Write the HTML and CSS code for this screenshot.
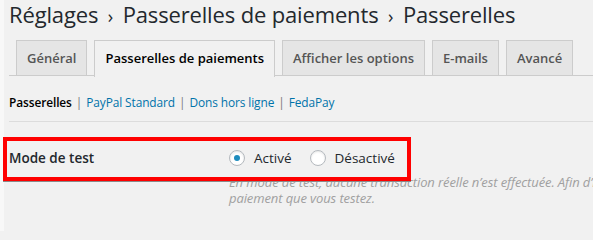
FILE: index.html
```html
<!DOCTYPE html>
<html lang="fr">
<head>
<meta charset="utf-8">
<link rel="stylesheet" href="styles.css">
</head>
<body>
<div class="edge"></div>
<div class="wrap">
  <h1 class="title">Réglages <span class="sep">›</span> Passerelles de paiements <span class="sep">›</span> Passerelles</h1>
  <nav class="tabs">
    <a class="tab">Général</a>
    <a class="tab active">Passerelles de paiements</a>
    <a class="tab">Afficher les options</a>
    <a class="tab">E-mails</a>
    <a class="tab">Avancé</a>
  </nav>
  <ul class="subnav">
    <li class="current">Passerelles</li>
    <li class="bar">|</li>
    <li><a>PayPal Standard</a></li>
    <li class="bar">|</li>
    <li><a>Dons hors ligne</a></li>
    <li class="bar">|</li>
    <li><a>FedaPay</a></li>
  </ul>
  <hr class="rule">
  <div class="row">
    <div class="label">Mode de test</div>
    <div class="field">
      <div class="radios">
        <label class="radio"><span class="dot checked"></span>Activé</label>
        <label class="radio"><span class="dot"></span>Désactivé</label>
      </div>
      <p class="desc">En mode de test, aucune transaction réelle n’est effectuée. Afin d’initier des paiements de test, utilisez le moyen de<br>paiement que vous testez.</p>
    </div>
  </div>
</div>
<div class="highlight"></div>
</body>
</html>
```
FILE: styles.css
```css
html, body {
  margin: 0;
  padding: 0;
  overflow: hidden;
  background: #f1f1f1;
  width: 593px;
  height: 231px;
}
body {
  position: relative;
  font-family: "Open Sans", "Noto Sans", sans-serif;
  color: #23282d;
}
.edge {
  position: absolute;
  left: 0;
  top: 0;
  width: 4px;
  height: 100%;
  background: #f8f8f8;
}
.wrap {
  padding-left: 9px;
}
.title {
  margin: 0;
  padding-top: 1px;
  font-size: 22px;
  font-weight: 400;
  line-height: 26px;
  white-space: nowrap;
  letter-spacing: -0.15px;
}
.sep {
  font-size: 18px;
  padding: 0 4px;
}
.tabs {
  display: flex;
  margin-top: 11px;
  border-bottom: 1px solid #ccc;
  height: 35px;
}
.tab {
  display: block;
  margin-left: 7px;
  padding: 5px 10px;
  line-height: 24px;
  font-size: 13px;
  font-weight: 600;
  color: #555;
  background: #e5e5e5;
  border: 1px solid #ccc;
  border-bottom: none;
  white-space: nowrap;
}
.tab.active {
  background: #f1f1f1;
  color: #000;
  height: 25px;
  padding-bottom: 6px;
  margin-bottom: -1px;
}
.subnav {
  list-style: none;
  margin: 17px 0 0;
  padding: 0;
  display: flex;
  font-size: 11.9px;
  line-height: 18px;
  white-space: nowrap;
  letter-spacing: -0.1px;
}
.subnav li { color: #0073aa; }
.subnav .current { color: #000; font-weight: 600; }
.subnav .bar { color: #777; padding: 0 4px; }
.subnav a { color: #0073aa; }
.rule {
  margin: 10px 0 0;
  border: 0;
  border-top: 1px solid #dcdcdc;
}
.row {
  display: flex;
  margin-top: 26px;
}
.label {
  flex: 0 0 220px;
  font-size: 13.5px;
  font-weight: 600;
  line-height: 20px;
  color: #23282d;
}
.field {
  display: flex;
  flex-direction: column;
  min-width: 0;
}
.radios {
  display: flex;
  align-items: center;
  height: 20px;
  font-size: 13.5px;
}
.radio {
  display: flex;
  align-items: center;
  margin-right: 18px;
}
.dot {
  width: 14px;
  height: 14px;
  border: 1px solid #b4b9be;
  border-radius: 50%;
  background: #fff;
  box-shadow: inset 0 1px 2px rgba(0,0,0,0.1);
  margin-right: 9px;
  position: relative;
}
.dot.checked::after {
  content: "";
  position: absolute;
  left: 4px;
  top: 4px;
  width: 6px;
  height: 6px;
  border-radius: 50%;
  background: #1e8cbe;
}
.desc {
  margin: 6px 0 0;
  font-size: 13px;
  font-style: italic;
  line-height: 16px;
  color: #a0a0a0;
  white-space: nowrap;
  letter-spacing: -0.1px;
}
.highlight {
  position: absolute;
  left: 3px;
  top: 137px;
  width: 400px;
  height: 36px;
  border: 4px solid #f00;
  box-shadow: 0 1px 0 #8a8a8a;
}
```
